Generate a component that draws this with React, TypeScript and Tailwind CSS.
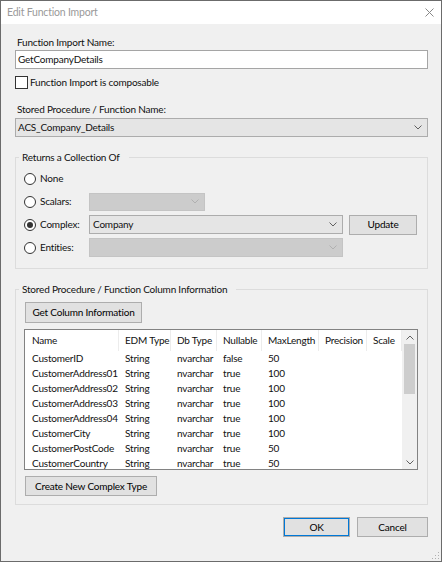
import React from "react";

const font = "font-['Lato','Segoe_UI',sans-serif]";

const ChevronDown = ({ color = "#606060" }: { color?: string }) => (
  <svg width="8" height="5" viewBox="0 0 8 5">
    <path d="M0.5 0.5 L4 4 L7.5 0.5" fill="none" stroke={color} strokeWidth="1" />
  </svg>
);

const ChevronUp = ({ color = "#606060" }: { color?: string }) => (
  <svg width="8" height="5" viewBox="0 0 8 5">
    <path d="M0.5 4.5 L4 1 L7.5 4.5" fill="none" stroke={color} strokeWidth="1" />
  </svg>
);

const Radio = ({ checked }: { checked?: boolean }) => (
  <span className="w-[12px] h-[12px] rounded-full border border-[#333] bg-white flex items-center justify-center shrink-0">
    {checked && <span className="w-[6px] h-[6px] rounded-full bg-[#333]" />}
  </span>
);

const Button = ({ children, className = "" }: { children: React.ReactNode; className?: string }) => (
  <div
    className={`h-[20px] bg-[#e1e1e1] border border-[#adadad] flex items-center justify-center text-black whitespace-nowrap ${className}`}
  >
    {children}
  </div>
);

const cols = ["Name", "EDM Type", "Db Type", "Nullable", "MaxLength", "Precision", "Scale"];
const rows: string[][] = [
  ["CustomerID", "String", "nvarchar", "false", "50"],
  ["CustomerAddress01", "String", "nvarchar", "true", "100"],
  ["CustomerAddress02", "String", "nvarchar", "true", "100"],
  ["CustomerAddress03", "String", "nvarchar", "true", "100"],
  ["CustomerAddress04", "String", "nvarchar", "true", "100"],
  ["CustomerCity", "String", "nvarchar", "true", "100"],
  ["CustomerPostCode", "String", "nvarchar", "true", "50"],
  ["CustomerCountry", "String", "nvarchar", "true", "50"],
];

const gridCols = "grid grid-cols-[93px_52px_46px_45px_57px_48px_35px]";

export default function App() {
  return (
    <div
      className={`relative w-[442px] h-[562px] border border-[#6b6b6b] bg-[#f0f0f0] flex flex-col ${font} text-[10px] leading-[15px] tracking-[-0.2px] text-[#111] overflow-hidden`}
    >
      {/* Title bar */}
      <div className="h-[23px] bg-white flex items-center justify-between pl-[6px] pr-[7px] shrink-0">
        <span className="text-[#9a9a9a] text-[10.5px]">Edit Function Import</span>
        <svg width="9" height="9" viewBox="0 0 9 9">
          <path d="M0.5 0.5 L8.5 8.5 M8.5 0.5 L0.5 8.5" stroke="#888" strokeWidth="1" fill="none" />
        </svg>
      </div>

      {/* Content */}
      <div className="flex-1 flex flex-col pl-[14px] pr-[13px] pt-[11px]">
        <div className="pl-[2px]">Function Import Name:</div>
        <div className="h-[19px] border border-[#a5a5a5] bg-white flex items-center px-[2px]">
          GetCompanyDetails
        </div>

        <div className="mt-[5px] h-[16px] flex items-center gap-[2px]">
          <span className="w-[13px] h-[13px] border border-[#333] bg-white shrink-0" />
          <span>Function Import is composable</span>
        </div>

        <div className="mt-[12px] pl-[2px]">Stored Procedure / Function Name:</div>
        <div className="mt-[1px] h-[19px] border border-[#acacac] bg-[#e5e5e5] flex items-center justify-between pl-[2px] pr-[5px]">
          <span>ACS_Company_Details</span>
          <ChevronDown />
        </div>

        {/* Returns a Collection Of */}
        <fieldset className="mt-[13px] border border-[#dcdcdc]">
          <legend className="ml-[3px] pl-[3px] pr-[9px]">Returns a Collection Of</legend>
          <div className="pl-[8px] pt-[2px] pb-[9px] flex flex-col">
            <div className="h-[23px] flex items-center gap-[4px]">
              <Radio />
              <span>None</span>
            </div>
            <div className="h-[23px] flex items-center gap-[4px]">
              <Radio />
              <span className="w-[45px]">Scalars:</span>
              <div className="w-[116px] h-[18px] border border-[#c4c4c4] bg-[#cccccc] flex items-center justify-end pr-[5px]">
                <ChevronDown color="#b0b0b0" />
              </div>
            </div>
            <div className="h-[23px] flex items-center gap-[4px]">
              <Radio checked />
              <span className="w-[45px]">Complex:</span>
              <div className="w-[254px] h-[19px] border border-[#acacac] bg-[#e5e5e5] flex items-center justify-between pl-[3px] pr-[5px]">
                <span>Company</span>
                <ChevronDown />
              </div>
              <Button className="ml-[2px] w-[68px]">Update</Button>
            </div>
            <div className="h-[23px] flex items-center gap-[4px]">
              <Radio />
              <span className="w-[45px]">Entities:</span>
              <div className="w-[254px] h-[19px] border border-[#c4c4c4] bg-[#cccccc] flex items-center justify-end pr-[5px]">
                <ChevronDown color="#b0b0b0" />
              </div>
            </div>
          </div>
        </fieldset>

        {/* Column information */}
        <fieldset className="mt-[13px] border border-[#dcdcdc]">
          <legend className="ml-[3px] pl-[3px] pr-[9px]">Stored Procedure / Function Column Information</legend>
          <div className="pl-[8px] pr-[9px] pt-[5px] pb-[8px] flex flex-col items-start">
            <Button className="ml-[1px] w-[117px] h-[21px]">Get Column Information</Button>

            <div className="mt-[6px] w-full h-[141px] border border-[#828282] bg-white flex overflow-hidden">
              <div className="flex-1 pl-[1px] overflow-hidden">
                <div className={`${gridCols} h-[21px]`}>
                  {cols.map((c) => (
                    <div key={c} className="pl-[6px] flex items-center border-r border-[#ececec] whitespace-nowrap">
                      {c}
                    </div>
                  ))}
                </div>
                {rows.map((r) => (
                  <div key={r[0]} className={`${gridCols} h-[15px]`}>
                    {r.map((v, i) => (
                      <div key={i} className="pl-[6px] whitespace-nowrap leading-[15px]">
                        {v}
                      </div>
                    ))}
                  </div>
                ))}
              </div>
              <div className="w-[15px] bg-[#f0f0f0] flex flex-col shrink-0">
                <div className="h-[14px] flex items-center justify-center">
                  <ChevronUp />
                </div>
                <div className="h-[50px] mx-[2px] bg-[#cdcdcd]" />
                <div className="flex-1" />
                <div className="h-[14px] flex items-center justify-center">
                  <ChevronDown />
                </div>
              </div>
            </div>

            <Button className="mt-[6px] ml-[1px] w-[132px]">Create New Complex Type</Button>
          </div>
        </fieldset>

        <div className="mt-[12px] flex justify-end gap-[7px]">
          <Button className="w-[67px] border-[#0078d7] shadow-[inset_0_0_0_1px_#0078d7]">OK</Button>
          <Button className="w-[71px]">Cancel</Button>
        </div>
      </div>

      {/* Resize grip */}
      <svg className="absolute right-[1px] bottom-[1px]" width="8" height="8" viewBox="0 0 8 8">
        <rect x="6" y="0" width="1" height="1" fill="#b0b0b0" />
        <rect x="3" y="3" width="1" height="1" fill="#b0b0b0" />
        <rect x="6" y="3" width="1" height="1" fill="#b0b0b0" />
        <rect x="0" y="6" width="1" height="1" fill="#b0b0b0" />
        <rect x="3" y="6" width="1" height="1" fill="#b0b0b0" />
        <rect x="6" y="6" width="1" height="1" fill="#b0b0b0" />
      </svg>
    </div>
  );
}
